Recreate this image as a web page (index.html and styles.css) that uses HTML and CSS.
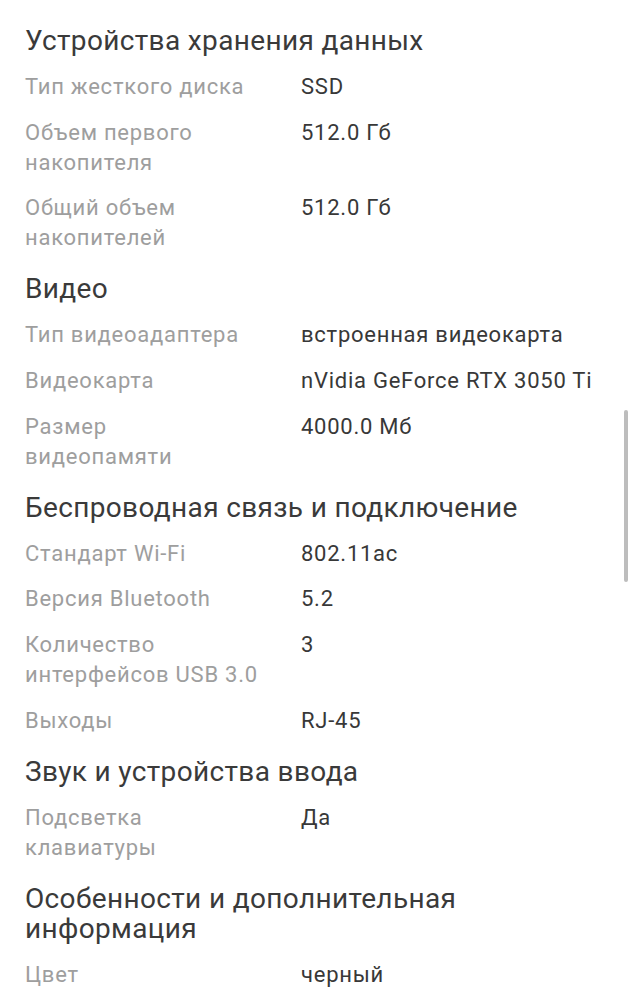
FILE: index.html
```html
<!DOCTYPE html>
<html lang="ru">
<head>
<meta charset="utf-8">
<link rel="stylesheet" href="styles.css">
</head>
<body>
<main class="specs">
  <section class="group">
    <h2 class="title">Устройства хранения данных</h2>
    <div class="row"><div class="label">Тип жесткого диска</div><div class="value">SSD</div></div>
    <div class="row"><div class="label">Объем первого<br>накопителя</div><div class="value">512.0 Гб</div></div>
    <div class="row"><div class="label">Общий объем<br>накопителей</div><div class="value">512.0 Гб</div></div>
  </section>
  <section class="group">
    <h2 class="title">Видео</h2>
    <div class="row"><div class="label">Тип видеоадаптера</div><div class="value">встроенная видеокарта</div></div>
    <div class="row"><div class="label">Видеокарта</div><div class="value">nVidia GeForce RTX 3050 Ti</div></div>
    <div class="row"><div class="label">Размер<br>видеопамяти</div><div class="value">4000.0 Мб</div></div>
  </section>
  <section class="group">
    <h2 class="title">Беспроводная связь и подключение</h2>
    <div class="row"><div class="label">Стандарт Wi-Fi</div><div class="value">802.11ac</div></div>
    <div class="row"><div class="label">Версия Bluetooth</div><div class="value">5.2</div></div>
    <div class="row"><div class="label">Количество<br>интерфейсов USB 3.0</div><div class="value">3</div></div>
    <div class="row"><div class="label">Выходы</div><div class="value">RJ-45</div></div>
  </section>
  <section class="group">
    <h2 class="title">Звук и устройства ввода</h2>
    <div class="row"><div class="label">Подсветка<br>клавиатуры</div><div class="value">Да</div></div>
  </section>
  <section class="group">
    <h2 class="title">Особенности и дополнительная<br>информация</h2>
    <div class="row"><div class="label">Цвет</div><div class="value">черный</div></div>
  </section>
</main>
<div class="scrollbar"></div>
</body>
</html>
```
FILE: styles.css
```css
html, body {
  margin: 0;
  padding: 0;
  background: #ffffff;
  overflow: hidden;
}
body {
  font-family: Roboto, "Noto Sans", sans-serif;
  height: 999px;
}
.specs {
  padding: 26px 0 0 25px;
  display: flex;
  flex-direction: column;
  gap: 21px;
}
.group {
  display: flex;
  flex-direction: column;
  gap: 15.8px;
}
.title {
  margin: 0;
  font-size: 28px;
  line-height: 30px;
  letter-spacing: 0.35px;
  font-weight: 400;
  color: #3a3a3a;
}
.row {
  display: flex;
  font-size: 22px;
  line-height: 30px;
  letter-spacing: 0.75px;
}
.label {
  width: 276px;
  flex: none;
  color: #9e9e9e;
}
.value {
  color: #383838;
}
.scrollbar {
  position: fixed;
  left: 624px;
  top: 410px;
  width: 4px;
  height: 172px;
  border-radius: 2px;
  background: #bdbdbd;
}
```
